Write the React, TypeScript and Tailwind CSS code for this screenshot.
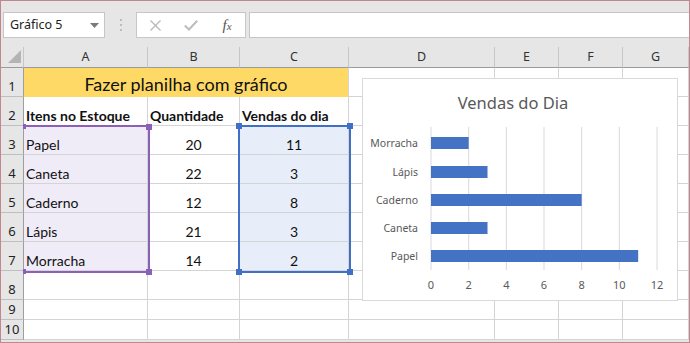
import React from "react";

const cols = ["A", "B", "C", "D", "E", "F", "G"];
const data: [string, number, number][] = [
  ["Papel", 20, 11],
  ["Caneta", 22, 3],
  ["Caderno", 12, 8],
  ["Lápis", 21, 3],
  ["Morracha", 14, 2],
];

const cellFont = { fontFamily: "Lato, 'Open Sans', sans-serif" };
const uiFont = { fontFamily: "'Noto Sans', 'Open Sans', sans-serif" };

function RowHead({ n }: { n: number }) {
  return (
    <div
      className="bg-[#e6e6e6] border-r border-b border-r-[#9e9e9e] border-b-[#bfbfbf] flex items-end justify-center pb-[2px] text-[13px] leading-[16px] text-[#222]"
      style={uiFont}
    >
      {n}
    </div>
  );
}

function Cell({ className = "", children }: { className?: string; children?: React.ReactNode }) {
  return (
    <div
      className={`border-r border-b border-[#d4d4d4] flex items-end pb-[1px] text-[14px] leading-[17px] text-[#111] ${className}`}
      style={cellFont}
    >
      {children}
    </div>
  );
}

function Chart() {
  const x0 = 68;
  const step = 37.67;
  const unit = step / 2;
  const bars: [string, number, number][] = [
    ["Morracha", 2, 58],
    ["Lápis", 3, 87],
    ["Caderno", 8, 115],
    ["Caneta", 3, 143],
    ["Papel", 11, 171],
  ];
  return (
    <div className="absolute left-[361px] top-[77px] w-[316px] h-[223px] bg-white border border-[#d9d9d9]">
      <svg width="314" height="221" viewBox="0 0 314 221" style={uiFont}>
        <text x="150" y="30" textAnchor="middle" fontSize="16.5" fill="#595959">
          Vendas do Dia
        </text>
        {[0, 1, 2, 3, 4, 5, 6].map((i) => (
          <line
            key={i}
            x1={x0 + i * step}
            x2={x0 + i * step}
            y1={48}
            y2={191}
            stroke="#d9d9d9"
            strokeWidth="1"
          />
        ))}
        {bars.map(([label, v, y]) => (
          <g key={label}>
            <rect x={x0} y={y} width={v * unit} height={12} fill="#4472c4" />
            <text x={55} y={y + 10} textAnchor="end" fontSize="10.5" fill="#595959">
              {label}
            </text>
          </g>
        ))}
        {[0, 2, 4, 6, 8, 10, 12].map((v, i) => (
          <text key={v} x={x0 + i * step} y={210} textAnchor="middle" fontSize="11" fill="#595959">
            {v}
          </text>
        ))}
      </svg>
    </div>
  );
}

export default function App() {
  return (
    <div className="relative w-[690px] h-[343px] border border-[#c3868f] bg-[#e6e6e6] overflow-hidden">
      {/* Formula bar */}
      <div className="h-[46px] flex items-start pt-[11px]">
        <div
          className="ml-[2px] w-[102px] h-[26px] bg-white border border-[#c6c6c6] flex items-center pl-[6px] pr-[5px] text-[12.5px] text-[#222]"
          style={uiFont}
        >
          <span className="flex-1">Gráfico 5</span>
          <svg width="9" height="5" viewBox="0 0 9 5">
            <path d="M0 0 H9 L4.5 5 Z" fill="#7a7a7a" />
          </svg>
        </div>
        <div className="w-[31px] h-[26px] flex flex-col items-center justify-center gap-[3px]">
          <div className="w-[2px] h-[2px] bg-[#bdbdbd]" />
          <div className="w-[2px] h-[2px] bg-[#bdbdbd]" />
          <div className="w-[2px] h-[2px] bg-[#bdbdbd]" />
        </div>
        <div className="w-[110px] h-[26px] bg-white border border-[#c6c6c6] flex items-center">
          <div className="w-[36px] flex justify-center">
            <svg width="11" height="11" viewBox="0 0 11 11">
              <path d="M0.5 0.5 L10.5 10.5 M10.5 0.5 L0.5 10.5" stroke="#b8b8b8" strokeWidth="1.3" />
            </svg>
          </div>
          <div className="w-[36px] flex justify-center">
            <svg width="14" height="11" viewBox="0 0 14 11">
              <path d="M0.8 5.5 L5 9.5 L13.2 0.8" stroke="#bdbdbd" strokeWidth="2" fill="none" />
            </svg>
          </div>
          <div className="w-[36px] flex justify-center">
            <span
              className="italic text-[15px] leading-none text-[#555]"
              style={{ fontFamily: "'Liberation Serif', serif" }}
            >
              f<span className="text-[11px]">x</span>
            </span>
          </div>
        </div>
        <div className="ml-[3px] flex-1 h-[26px] bg-white border border-[#c6c6c6] border-r-0" />
      </div>

      {/* Grid */}
      <div
        className="grid bg-white"
        style={{
          gridTemplateColumns: "23px 124px 92px 109px 146px 64px 64px 66px",
          gridTemplateRows: "21px repeat(8, 29px) 20px 20px",
        }}
      >
        {/* column headers */}
        <div className="bg-[#e6e6e6] border-r border-b border-r-[#c6c6c6] border-b-[#9b9b9b] relative">
          <svg className="absolute left-[7px] top-[3px]" width="13" height="13" viewBox="0 0 13 13">
            <path d="M13 0 V13 H0 Z" fill="#b4b4b4" />
          </svg>
        </div>
        {cols.map((c) => (
          <div
            key={c}
            className="bg-[#e6e6e6] border-r border-b border-r-[#c6c6c6] border-b-[#9b9b9b] flex items-center justify-center text-[12.5px] text-[#333]"
            style={uiFont}
          >
            {c}
          </div>
        ))}

        {/* row 1 */}
        <RowHead n={1} />
        <div
          className="col-span-3 bg-[#ffd966] border-r border-b border-r-[#d4d4d4] border-b-[#ffd966] flex items-end justify-center pb-[1px] text-[18px] leading-[22px] text-[#111]"
          style={cellFont}
        >
          Fazer planilha com gráfico
        </div>
        <Cell />
        <Cell />
        <Cell />
        <Cell />

        {/* row 2 */}
        <RowHead n={2} />
        <Cell className="font-bold pl-[2px]">Itens no Estoque</Cell>
        <Cell className="font-bold pl-[2px]">Quantidade</Cell>
        <Cell className="font-bold pl-[2px]">Vendas do dia</Cell>
        <Cell />
        <Cell />
        <Cell />
        <Cell />

        {data.map(([name, q, v], i) => (
          <React.Fragment key={name}>
            <RowHead n={i + 3} />
            <Cell className="bg-[#f0ecf7] pl-[2px]">{name}</Cell>
            <Cell className="justify-center">{q}</Cell>
            <Cell className="bg-[#e8eef9] justify-center">{v}</Cell>
            <Cell />
            <Cell />
            <Cell />
            <Cell />
          </React.Fragment>
        ))}

        {[8, 9, 10].map((n) => (
          <React.Fragment key={n}>
            <RowHead n={n} />
            <Cell />
            <Cell />
            <Cell />
            <Cell />
            <Cell />
            <Cell />
            <Cell />
          </React.Fragment>
        ))}
      </div>

      {/* Purple range highlight A3:A7 */}
      <div className="absolute left-[23px] top-[124px] w-[126px] h-[148px] border-t-2 border-r-2 border-b-2 border-[#8c60b8]">
        <div className="absolute -left-[1px] -top-[3px] w-[3px] h-[5px] bg-[#8c60b8]" />
        <div className="absolute -right-[4px] -top-[3px] w-[6px] h-[6px] bg-[#8c60b8]" />
        <div className="absolute -left-[1px] -bottom-[3px] w-[3px] h-[5px] bg-[#8c60b8]" />
        <div className="absolute -right-[4px] -bottom-[4px] w-[6px] h-[6px] bg-[#8c60b8]" />
      </div>

      {/* Blue range highlight C3:C7 */}
      <div className="absolute left-[237px] top-[124px] w-[113px] h-[148px] border-2 border-[#3f6fc6]">
        <div className="absolute -left-[4px] -top-[4px] w-[6px] h-[6px] bg-[#3f6fc6]" />
        <div className="absolute -right-[4px] -top-[4px] w-[6px] h-[6px] bg-[#3f6fc6]" />
        <div className="absolute -left-[4px] -bottom-[4px] w-[6px] h-[6px] bg-[#3f6fc6]" />
        <div className="absolute -right-[4px] -bottom-[4px] w-[6px] h-[6px] bg-[#3f6fc6]" />
      </div>

      <Chart />
    </div>
  );
}
